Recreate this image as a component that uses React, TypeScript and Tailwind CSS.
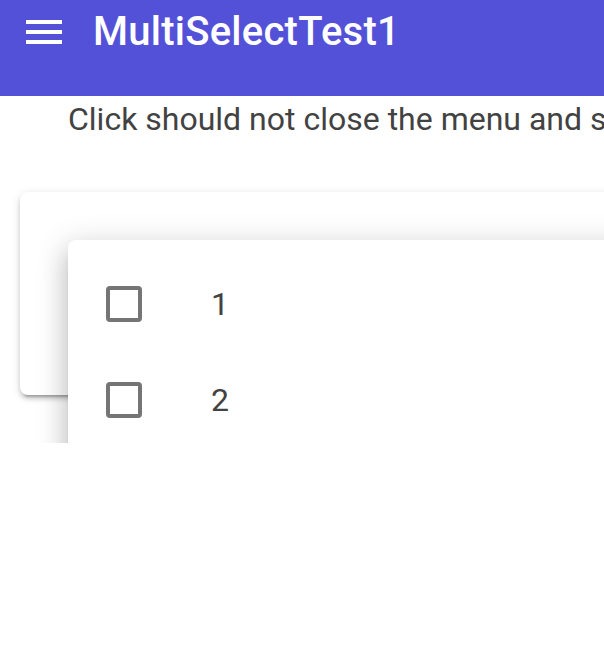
import React from 'react';

const items = ['1', '2'];

const Checkbox: React.FC = () => (
    <div className="w-[36px] h-[36px] rounded-[4px] border-[4px] border-[#757575] shrink-0" />
);

export default function App() {
    return (
        <div
            className="w-[604px] h-[656px] bg-white overflow-hidden"
            style={{ fontFamily: 'Roboto, "Liberation Sans", sans-serif' }}
        >
            <header className="h-[96px] bg-[#5451d9] text-white">
                <div className="h-[64px] flex items-center pl-[26px]">
                    <div className="flex flex-col gap-[6px] w-[36px]">
                        <span className="block h-[4px] bg-white" />
                        <span className="block h-[4px] bg-white" />
                        <span className="block h-[4px] bg-white" />
                    </div>
                    <h1 className="ml-[31px] text-[40px] font-medium leading-[40px] tracking-[0.25px]">
                        MultiSelectTest1
                    </h1>
                </div>
            </header>

            <div className="relative h-[347px] overflow-hidden">
                <p className="pl-[68px] pt-[4px] text-[32px] leading-[38px] text-[#424242] whitespace-nowrap">
                    Click should not close the menu and select the item
                </p>

                <div className="ml-[20px] mt-[54px] w-[700px] h-[203px] bg-white rounded-[8px] shadow-[0_6px_2px_-4px_rgba(0,0,0,0.2),0_4px_4px_0_rgba(0,0,0,0.14),0_2px_10px_0_rgba(0,0,0,0.12)]" />

                {/* open select panel */}
                <div className="absolute left-[68px] top-[144px] w-[640px] h-[260px] bg-white rounded-[8px] pt-[16px] shadow-[0_10px_10px_-6px_rgba(0,0,0,0.2),0_16px_24px_2px_rgba(0,0,0,0.14),0_6px_30px_5px_rgba(0,0,0,0.12)]">
                    {items.map((item) => (
                        <div key={item} className="h-[96px] flex items-center pl-[38px]">
                            <Checkbox />
                            <span className="ml-[69px] text-[32px] text-[#424242]">{item}</span>
                        </div>
                    ))}
                </div>
            </div>
        </div>
    );
}
